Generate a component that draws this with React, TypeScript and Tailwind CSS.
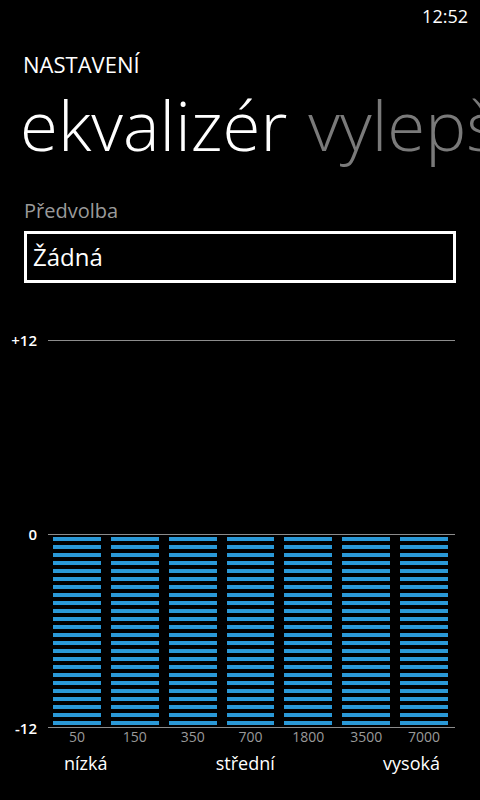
import React from "react";

const BANDS = ["50", "150", "350", "700", "1800", "3500", "7000"];
const STRIPES = Array.from({ length: 24 }, (_, i) => i);

const font = { fontFamily: '"Open Sans", "Noto Sans", sans-serif' };

function Bar() {
  return (
    <div className="flex flex-col gap-[4px]">
      {STRIPES.map((i) => (
        <div key={i} className="h-[4px] bg-[#2a98d6]" />
      ))}
    </div>
  );
}

export default function App() {
  return (
    <div
      className="w-[480px] h-[800px] bg-black text-white overflow-hidden flex flex-col"
      style={font}
    >
      {/* status bar */}
      <div className="mt-[7px] pr-[12px] flex justify-end text-[18px] leading-none">
        12:52
      </div>

      <div className="mt-[28px] pl-[23px] text-[22px] leading-none">
        NASTAVENÍ
      </div>

      {/* pivot headers */}
      <div className="mt-[15px] pl-[20px] flex gap-[21px] whitespace-nowrap text-[69px] leading-none font-light">
        <span>ekvalizér</span>
        <span className="text-[#7a7a7a]">vylepšení</span>
      </div>

      <div className="mt-[42px] pl-[24px] text-[20px] leading-none text-[#9a9a9a]">
        Předvolba
      </div>

      <div className="mt-[10px] mx-[24px] h-[52px] border-[3px] border-white flex items-center pl-[6px] text-[24px] leading-none">
        Žádná
      </div>

      {/* equalizer chart */}
      <div className="mt-[57px] flex items-start">
        <div className="w-[48px] -mt-[10px] h-[408px] flex flex-col justify-between pr-[11px] text-right text-[15px] font-semibold">
          <div className="h-[20px] leading-[20px]">+12</div>
          <div className="h-[20px] leading-[20px]">0</div>
          <div className="h-[20px] leading-[20px]">-12</div>
        </div>
        <div className="w-[407px] flex flex-col">
          <div className="h-px bg-[#8c8c8c]" />
          <div className="h-[193px]" />
          <div className="h-px bg-[#8c8c8c]" />
          <div className="pl-[5px] pr-[7px] py-[2px] grid grid-cols-7 gap-[10px]">
            {BANDS.map((b) => (
              <Bar key={b} />
            ))}
          </div>
          <div className="h-px bg-[#8c8c8c]" />
          <div className="pl-[5px] pr-[7px] grid grid-cols-7 gap-[10px]">
            {BANDS.map((b) => (
              <div
                key={b}
                className="text-center text-[14px] leading-[18px] text-[#9a9a9a]"
              >
                {b}
              </div>
            ))}
          </div>
        </div>
      </div>

      <div className="mt-[8px] pl-[64px] pr-[40px] flex justify-between text-[18px] leading-none">
        <span>nízká</span>
        <span>střední</span>
        <span>vysoká</span>
      </div>
    </div>
  );
}
